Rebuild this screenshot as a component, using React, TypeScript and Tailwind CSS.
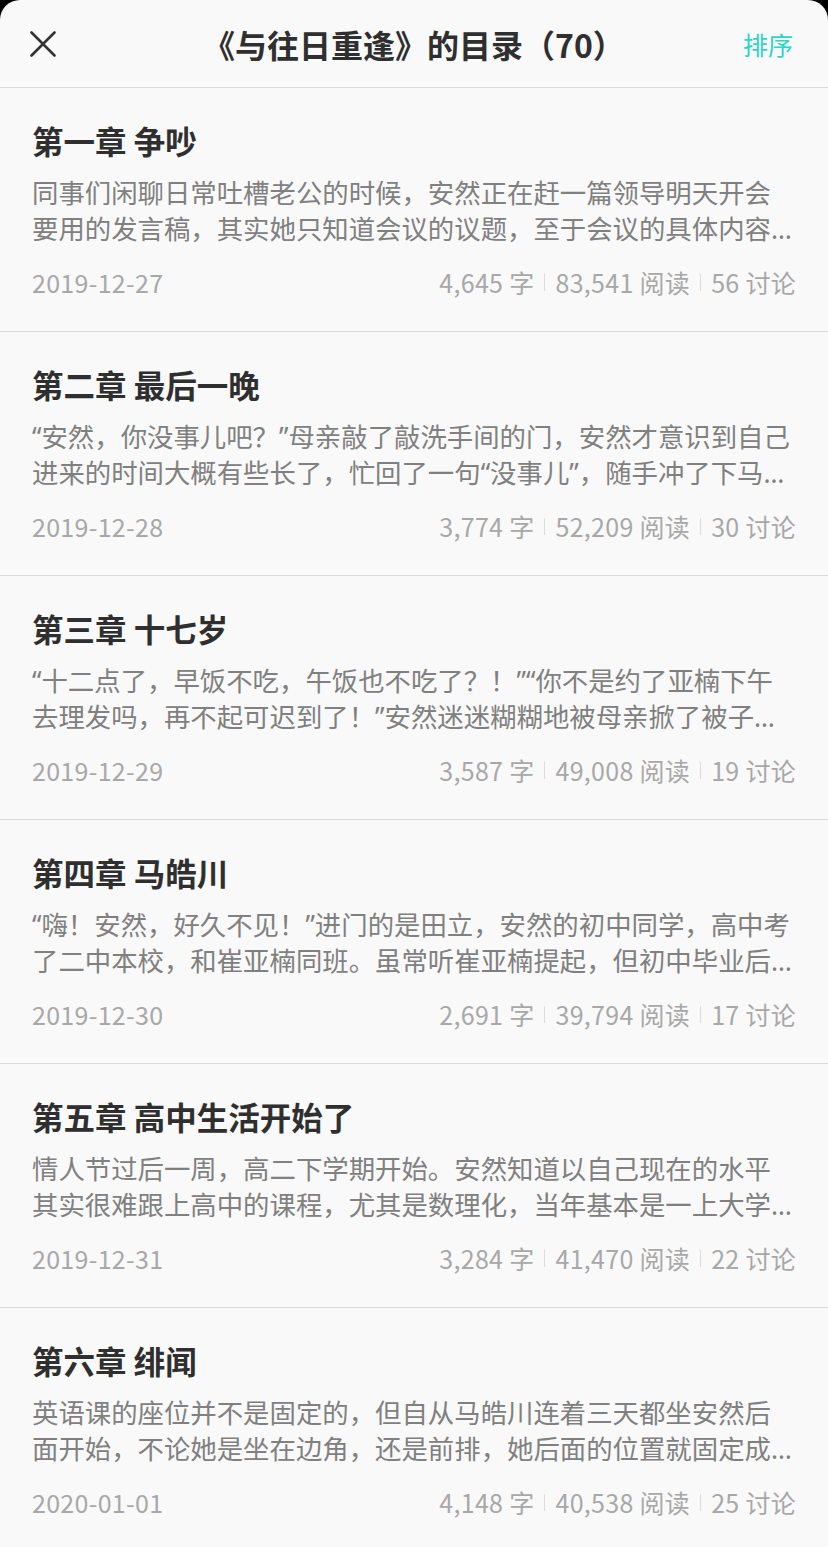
import React from "react";

type Chapter = {
  title: string;
  lines: [string, string];
  date: string;
  words: string;
  reads: string;
  comments: string;
};

// summaries are pre-broken into the two visible lines; the second one is cut with an ellipsis
const CHAPTERS: Chapter[] = [
  {
    title: "第一章 争吵",
    lines: [
      "同事们闲聊日常吐槽老公的时候，安然正在赶一篇领导明天开会",
      "要用的发言稿，其实她只知道会议的议题，至于会议的具体内容她一点都不清楚",
    ],
    date: "2019-12-27",
    words: "4,645",
    reads: "83,541",
    comments: "56",
  },
  {
    title: "第二章 最后一晚",
    lines: [
      "“安然，你没事儿吧？”母亲敲了敲洗手间的门，安然才意识到自己",
      "进来的时间大概有些长了，忙回了一句“没事儿”，随手冲了下马桶，打开门走了出去",
    ],
    date: "2019-12-28",
    words: "3,774",
    reads: "52,209",
    comments: "30",
  },
  {
    title: "第三章 十七岁",
    lines: [
      "“十二点了，早饭不吃，午饭也不吃了？！”“你不是约了亚楠下午",
      "去理发吗，再不起可迟到了！”安然迷迷糊糊地被母亲掀了被子，一下子清醒过来",
    ],
    date: "2019-12-29",
    words: "3,587",
    reads: "49,008",
    comments: "19",
  },
  {
    title: "第四章 马皓川",
    lines: [
      "“嗨！安然，好久不见！”进门的是田立，安然的初中同学，高中考",
      "了二中本校，和崔亚楠同班。虽常听崔亚楠提起，但初中毕业后两人就没见过",
    ],
    date: "2019-12-30",
    words: "2,691",
    reads: "39,794",
    comments: "17",
  },
  {
    title: "第五章 高中生活开始了",
    lines: [
      "情人节过后一周，高二下学期开始。安然知道以自己现在的水平",
      "其实很难跟上高中的课程，尤其是数理化，当年基本是一上大学就全还给老师了",
    ],
    date: "2019-12-31",
    words: "3,284",
    reads: "41,470",
    comments: "22",
  },
  {
    title: "第六章 绯闻",
    lines: [
      "英语课的座位并不是固定的，但自从马皓川连着三天都坐安然后",
      "面开始，不论她是坐在边角，还是前排，她后面的位置就固定成了马皓川的专座",
    ],
    date: "2020-01-01",
    words: "4,148",
    reads: "40,538",
    comments: "25",
  },
];

const FONT = "font-['Noto_Sans_CJK_SC',_'Noto_Sans',_sans-serif]";
// latin font first so quotes and the ellipsis come out narrow, CJK falls through
const SUMMARY_FONT = "font-['Noto_Sans',_'Noto_Sans_CJK_SC',_sans-serif]";

function Sep() {
  return <span className="mx-[10px] inline-block h-[17px] w-px bg-[#dcdcdc]" />;
}

function ChapterRow({ c }: { c: Chapter }) {
  return (
    <div className="border-b border-[#dcdcdc] pl-8 pr-8 pt-8 pb-[33px]">
      <h2 className="h-[40px] text-[31.5px] font-bold leading-[40px] text-[#2f2f2f]">{c.title}</h2>
      <div className={`mt-[15px] text-[26.4px] leading-[36px] text-[#808080] ${SUMMARY_FONT}`}>
        <p className="h-[36px] overflow-hidden whitespace-nowrap">{c.lines[0]}</p>
        <p className="-mr-[4px] h-[36px] overflow-hidden text-ellipsis whitespace-nowrap">{c.lines[1]}</p>
      </div>
      <div className="mt-[19px] flex h-[32px] items-center justify-between text-[25px] leading-[32px] tracking-[0.3px] text-[#a8a8a8]">
        <span>{c.date}</span>
        <span className="flex items-center">
          <span>{c.words} 字</span>
          <Sep />
          <span>{c.reads} 阅读</span>
          <Sep />
          <span>{c.comments} 讨论</span>
        </span>
      </div>
    </div>
  );
}

export default function App() {
  return (
    <div className={`h-[1547px] overflow-hidden bg-black ${FONT}`}>
      <div className="h-full rounded-t-[20px] bg-[#f9f9f9]">
        {/* Header */}
        <div className="grid h-[88px] grid-cols-[1fr_auto_1fr] items-center border-b border-[#dcdcdc] px-[30px]">
          <button className="flex h-[26px] w-[26px] items-center justify-center" aria-label="关闭">
            <svg viewBox="0 0 26 26" className="h-[26px] w-[26px]" fill="none" stroke="#333" strokeWidth="2.6" strokeLinecap="round">
              <path d="M1.5 1.5 L24.5 24.5 M24.5 1.5 L1.5 24.5" />
            </svg>
          </button>
          <h1 className="text-[32px] font-bold leading-[40px] text-[#2f2f2f]">《与往日重逢》的目录（70）</h1>
          <button className="justify-self-end pr-[5px] text-[25px] leading-[36px] text-[#2dd4c8]">排序</button>
        </div>

        {CHAPTERS.map((c) => (
          <ChapterRow key={c.date} c={c} />
        ))}
      </div>
    </div>
  );
}
